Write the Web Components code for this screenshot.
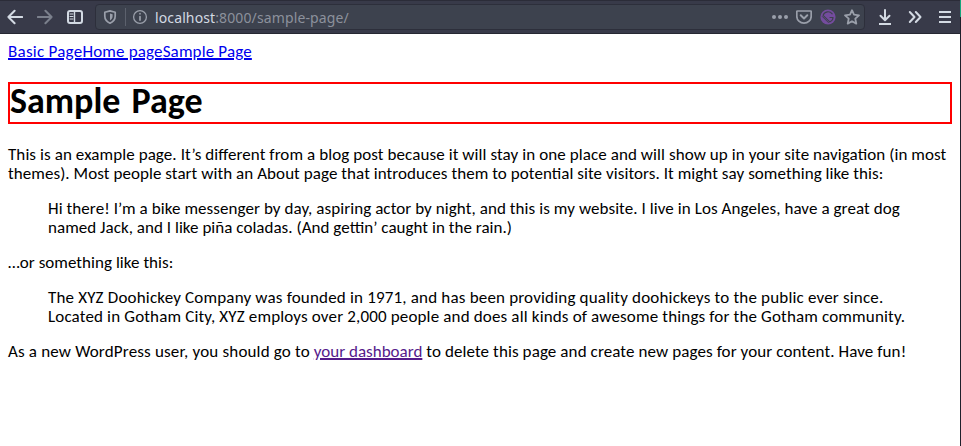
<!DOCTYPE html>
<html lang="en"><head><meta charset="utf-8"><title>Sample Page</title>
<style>
html,body{margin:0;height:100%;overflow:hidden;background:#fff}
</style></head><body>
<browser-window>
<browser-toolbar slot="toolbar"></browser-toolbar>
<sample-page></sample-page>
</browser-window>
<script>
class BrowserWindow extends HTMLElement{constructor(){super();this.attachShadow({mode:'open'}).innerHTML=`
<style>:host{display:grid;grid-template-columns:960px 1px;height:446px;width:961px}
.main{display:flex;flex-direction:column;min-width:0}
.edge{background:linear-gradient(#16a57c 0 17px,#1f202b 17px)}</style>
<div class="main"><slot name="toolbar"></slot><slot></slot></div><div class="edge"></div>`}}
class TbIcon extends HTMLElement{
static shapes={
back:'<path d="M15.2 8H1.4M7.6 1.8L1.4 8l6.2 6.2" stroke-width="2"/>',
forward:'<path d="M.8 8h13.8M8.4 1.8L14.6 8l-6.2 6.2" stroke-width="2"/>',
sidebar:'<rect x="1" y="2" width="14" height="12" rx="2" stroke-width="2"/><path d="M7.5 2v12" stroke-width="1.4"/><path d="M3 5h3M3 7.5h3M3 10h3" stroke-width="1"/>',
shield:'<path d="M8 1.9L13.2 3.3v3.6c0 3.2-1.6 5.6-5.2 7.3-3.6-1.7-5.2-4.1-5.2-7.3V3.3z" stroke-width="1.7"/><path d="M8 4.6v6.8c1.8-1.2 2.600-2.500 2.600-4.500V5.300z" fill="currentColor" stroke="none"/>',
info:'<circle cx="8" cy="8" r="6.4" stroke-width="1.3"/><path d="M8 7.500v3.600M8 4.600v.2" stroke-width="1.7"/>',
dots:'<g fill="currentColor" stroke="none"><circle cx="2" cy="8" r="2"/><circle cx="8" cy="8" r="2"/><circle cx="14" cy="8" r="2"/></g>',
pocket:'<path d="M1.4 2h13.2a.6.6 0 0 1 .6.6v4.6a7.2 7 0 0 1-14.4 0V2.600a.6.6 0 0 1 .6-.6z" stroke-width="1.7"/><path d="M4.7 6.300L8 9.500l3.300-3.200" stroke-width="2"/>',
gatsby:'<circle cx="8" cy="8" r="7.600" fill="#744c9e" stroke="none"/><path d="M2.400 7.600l6 6" stroke="#3d414d" stroke-width="1"/><path d="M12.200 4.900A5.200 5.200 0 0 0 3.100 6.300l6.600 6.600a5.200 5.200 0 0 0 3.400-4.400H10" stroke="#3d414d" stroke-width="1.100"/>',
star:'<path d="M8 1.200l2 4.500 5 .6-3.700 3.400 1 4.900L8 12.200l-4.300 2.400 1-4.900L1 6.300l5-.6z" stroke-width="1.800"/>',
download:'<path d="M8 1v10M3.500 6.800L8 11.200l4.500-4.400" stroke-width="2"/><path d="M2 15h12" stroke-width="2" stroke-linecap="butt"/>',
more:'<path d="M2.800 3L7.500 8l-4.700 5M8.800 3L13.500 8l-4.700 5" stroke-width="2"/>',
menu:'<path d="M2 3h12M2 8h12M2 13h12" stroke-width="2" stroke-linecap="butt"/>'};
connectedCallback(){this.attachShadow({mode:'open'}).innerHTML=`<style>:host{display:block;width:16px;height:16px;flex:none}svg{display:block}</style>
<svg width="16" height="16" viewBox="0 0 16 16" fill="none" stroke="currentColor" stroke-linecap="round" stroke-linejoin="round">${TbIcon.shapes[this.getAttribute('name')]}</svg>`}}
class BrowserToolbar extends HTMLElement{constructor(){super();this.attachShadow({mode:'open'}).innerHTML=`
<style>:host{display:flex;box-sizing:border-box;height:34px;width:960px;flex:none;background:#383a49;border-top:1px solid #2b2c38;border-bottom:1px solid #262732;align-items:center;color:#d3dae3;padding-left:7px}
.nav{display:flex;gap:14px;width:88px}.dim{color:#7b808c}
.url{box-sizing:border-box;display:flex;align-items:center;width:770px;height:26px;border:1px solid #2d2f3b;border-radius:4px;background:#3d424e;color:#9a9faa;padding:0 4px 0 6px}
.sep{width:1px;height:18px;background:#5c616d;margin:0 6px 0 7px}
.addr{font:14px/20px "Noto Sans","Open Sans",sans-serif;letter-spacing:.12px;color:#8c919c;margin-left:7px;padding-top:2px;flex:1;white-space:nowrap}.addr b{font-weight:400;color:#d3dae3}
.acts{display:flex;gap:8px}.right{display:flex;gap:14px;margin-left:12px}</style>
<div class="nav"><tb-icon name="back"></tb-icon><tb-icon class="dim" name="forward"></tb-icon><tb-icon name="sidebar"></tb-icon></div>
<div class="url"><tb-icon name="shield"></tb-icon><span class="sep"></span><tb-icon name="info"></tb-icon>
<span class="addr"><b>localhost</b>:8000/sample-page/</span>
<div class="acts"><tb-icon name="dots"></tb-icon><tb-icon name="pocket"></tb-icon><tb-icon name="gatsby"></tb-icon><tb-icon name="star"></tb-icon></div></div>
<div class="right"><tb-icon name="download"></tb-icon><tb-icon name="more"></tb-icon><tb-icon name="menu"></tb-icon></div>`}}
class SamplePage extends HTMLElement{constructor(){super();this.attachShadow({mode:'open'}).innerHTML=`
<style>:host{display:block;padding:8px;font:17px/19px Carlito,Lato,sans-serif;color:#000;font-feature-settings:"liga" 1,"clig" 1}
nav{height:19px;letter-spacing:.15px}nav a:first-child{letter-spacing:.26px}a{color:#00e;text-decoration:underline;text-decoration-thickness:2px;text-underline-offset:1px;text-decoration-skip-ink:auto}a.v{color:#551a8b;letter-spacing:0}
h1{font-size:36px;line-height:34px;padding-bottom:4px;word-spacing:3px;margin:21px 0;border:2px solid red;font-weight:700}
p{margin:16px 0}blockquote{margin:16px 40px}.l{display:block;white-space:nowrap}</style>
<nav><a href="#">Basic Page</a><a href="#">Home page</a><a href="#">Sample Page</a></nav>
<h1>Sample Page</h1>
<p><span class="l" style="letter-spacing:.084px">This is an example page. It’s different from a blog post because it will stay in one place and will show up in your site navigation (in most</span><span class="l" style="letter-spacing:.062px">themes). Most people start with an About page that introduces them to potential site visitors. It might say something like this:</span></p>
<blockquote><span class="l" style="letter-spacing:.074px">Hi there! I’m a bike messenger by day, aspiring actor by night, and this is my website. I live in Los Angeles, have a great dog</span><span class="l" style="letter-spacing:.03px">named Jack, and I like piña coladas. (And gettin’ caught in the rain.)</span></blockquote>
<p style="letter-spacing:.04px">…or something like this:</p>
<blockquote><span class="l" style="letter-spacing:.18px">The XYZ Doohickey Company was founded in 1971, and has been providing quality doohickeys to the public ever since.</span><span class="l" style="letter-spacing:.154px">Located in Gotham City, XYZ employs over 2,000 people and does all kinds of awesome things for the Gotham community.</span></blockquote>
<p class="l"><span style="letter-spacing:.17px">As a new WordPress user, you should go to </span><a class="v" href="#">your dashboard</a><span style="letter-spacing:.1px"> to delete this page and create new pages for your content. Have fun!</span></p>`}}
customElements.define('tb-icon',TbIcon);customElements.define('browser-toolbar',BrowserToolbar);customElements.define('sample-page',SamplePage);customElements.define('browser-window',BrowserWindow);
</script></body></html>
